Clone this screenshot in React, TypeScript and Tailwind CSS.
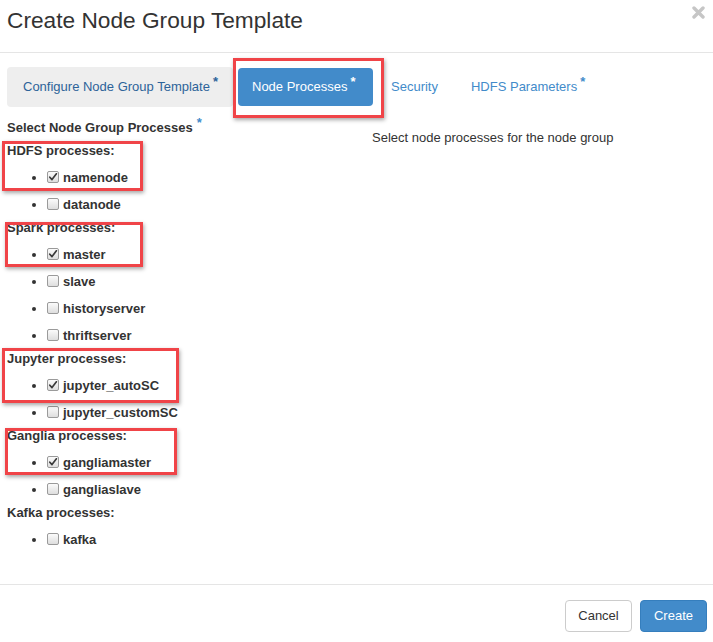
import React from "react";

const font = { fontFamily: '"Liberation Sans", Arial, Helvetica, sans-serif' };

function Check({ checked }: { checked?: boolean }) {
  return (
    <span className="inline-flex items-center justify-center w-[12px] h-[12px] rounded-[2px] border border-[#9a9a9a] bg-gradient-to-b from-[#fbfbfb] to-[#dedede] mr-[4px] relative top-[-2px] align-middle">
      {checked && (
        <svg width="10" height="10" viewBox="0 0 10 10">
          <path d="M1.8 5.2 L4 7.6 L8.4 1.8" fill="none" stroke="#3a3a3a" strokeWidth="1.7" strokeLinecap="round" strokeLinejoin="round" />
        </svg>
      )}
    </span>
  );
}

type Group = { title: string; items: { name: string; checked?: boolean }[] };

const groups: Group[] = [
  { title: "HDFS processes:", items: [{ name: "namenode", checked: true }, { name: "datanode" }] },
  {
    title: "Spark processes:",
    items: [{ name: "master", checked: true }, { name: "slave" }, { name: "historyserver" }, { name: "thriftserver" }],
  },
  { title: "Jupyter processes:", items: [{ name: "jupyter_autoSC", checked: true }, { name: "jupyter_customSC" }] },
  { title: "Ganglia processes:", items: [{ name: "gangliamaster", checked: true }, { name: "gangliaslave" }] },
  { title: "Kafka processes:", items: [{ name: "kafka" }] },
];

function RedBox({ cls }: { cls: string }) {
  return (
    <div
      className={`absolute border-[3px] border-[#f04448] pointer-events-none shadow-[1px_2px_4px_rgba(0,0,0,0.35)] ${cls}`}
    />
  );
}

export default function App() {
  return (
    <div className="relative w-[713px] h-[642px] bg-white text-[#333] overflow-hidden" style={font}>
      {/* Header */}
      <div className="h-[53px] border-b border-[#e5e5e5] flex items-start justify-between pl-[7px] pr-[8px]">
        <h4 className="text-[22.7px] leading-[26px] mt-[7px] font-normal text-[#333]">Create Node Group Template</h4>
        <button className="mt-[6px]" aria-label="close">
          <svg width="13" height="13" viewBox="0 0 13 13">
            <path d="M2 2 L11 11 M11 2 L2 11" stroke="#c6c6c6" strokeWidth="3.4" strokeLinecap="round" />
          </svg>
        </button>
      </div>

      {/* Tabs */}
      <div className="flex items-center mt-[14px] ml-[7px] text-[13px]">
        <div className="h-[40px] w-[226px] bg-[#eeeeee] rounded-[4px] flex items-center pl-[16px] text-[#2d6399]">
          Configure Node Group Template
          <span className="font-bold text-[13px] relative top-[-5px] ml-[3px]">*</span>
        </div>
        <div className="h-[38px] w-[135px] ml-[5px] bg-[#428bca] rounded-[4px] flex items-center pl-[14px] text-white">
          Node Processes
          <span className="font-bold text-[13px] relative top-[-5px] ml-[3px]">*</span>
        </div>
        <div className="h-[40px] flex items-center ml-[18px] text-[#428bca]">Security</div>
        <div className="h-[40px] flex items-center ml-[33px] text-[#428bca]">
          HDFS Parameters
          <span className="font-bold text-[13px] relative top-[-5px] ml-[3px]">*</span>
        </div>
      </div>

      {/* Body */}
      <div className="flex mt-[11px] text-[13px]">
        <div className="w-[372px] pl-[7px]">
          <div className="font-bold leading-[20px]">
            Select Node Group Processes
            <span className="text-[#428bca] relative top-[-5px] ml-[4px]">*</span>
          </div>
          <div className="mt-[3px]">
            {groups.map((g) => (
              <div key={g.title}>
                <div className="font-bold leading-[20px]">{g.title}</div>
                <ul className="list-disc pl-[40px] pt-[3px]">
                  {g.items.map((it) => (
                    <li key={it.name} className="h-[27px] leading-[27px] font-bold">
                      <Check checked={it.checked} />
                      {it.name}
                    </li>
                  ))}
                </ul>
              </div>
            ))}
          </div>
        </div>
        <div className="pt-[10px] leading-[20px]">Select node processes for the node group</div>
      </div>

      {/* Footer */}
      <div className="absolute left-0 right-0 top-[584px] border-t border-[#e5e5e5] flex justify-end gap-[8px] pr-[6px] pt-[15px] text-[13px]">
        <button className="h-[32px] w-[67px] rounded-[4px] border border-[#cccccc] bg-white text-[#333]">Cancel</button>
        <button className="h-[32px] w-[67px] rounded-[4px] border border-[#357ebd] bg-[#428bca] text-white">Create</button>
      </div>

      {/* Annotation boxes */}
      <RedBox cls="left-[233px] top-[58px] w-[151px] h-[60px]" />
      <RedBox cls="left-[2px] top-[141px] w-[141px] h-[50px]" />
      <RedBox cls="left-[5px] top-[222px] w-[138px] h-[45px]" />
      <RedBox cls="left-[2px] top-[348px] w-[177px] h-[55px]" />
      <RedBox cls="left-[5px] top-[428px] w-[172px] h-[47px]" />
    </div>
  );
}
